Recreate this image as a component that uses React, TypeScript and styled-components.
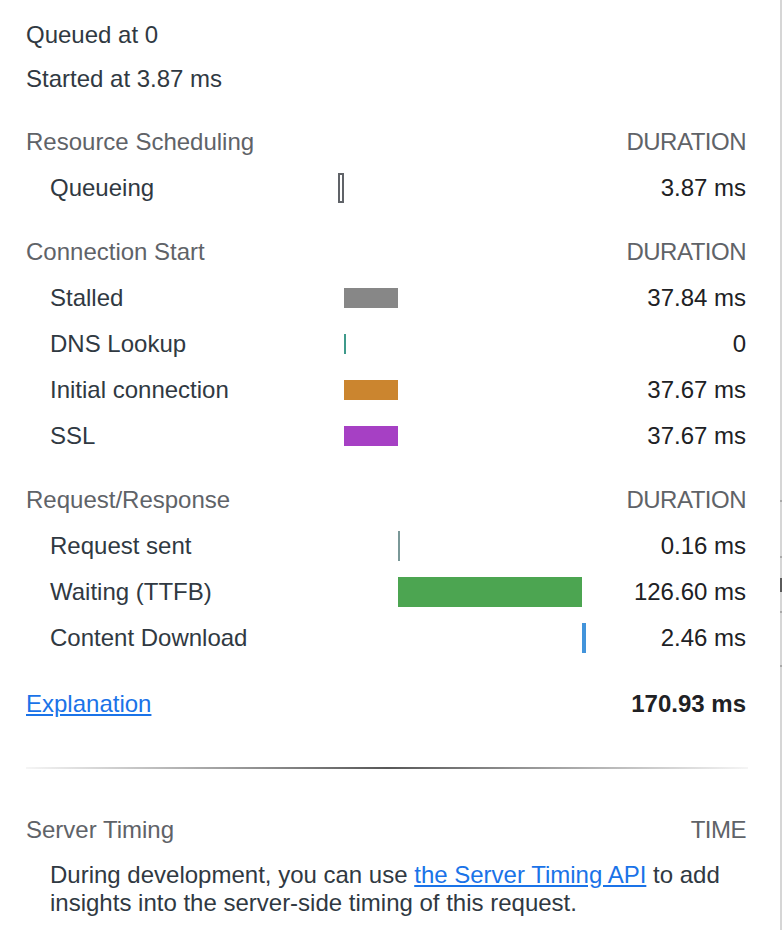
import styled, { createGlobalStyle } from "styled-components";

const GlobalStyle = createGlobalStyle`
  body {
    margin: 0;
    background: #ffffff;
    font-family: "Liberation Sans", Arial, Helvetica, sans-serif;
    font-size: 24px;
    color: #303942;
  }
`;

const TRACK_WIDTH = 248;

const Page = styled.div`
  display: flex;
  min-height: 930px;
`;

const Panel = styled.div`
  width: 780px;
  box-sizing: border-box;
  padding: 13px 34px 0 26px;
`;

const Edge = styled.div`
  width: 2px;
  background: #d6d6d6;
  position: relative;
`;

const EdgeTick = styled.div<{ $top: number; $h: number; $dark?: boolean }>`
  position: absolute;
  left: 0;
  width: 2px;
  top: ${(p) => p.$top}px;
  height: ${(p) => p.$h}px;
  background: ${(p) => (p.$dark ? "#5a5a5a" : "#a9a9a9")};
`;

const MetaLine = styled.div`
  height: 44px;
  line-height: 44px;
  color: #303942;
`;

const Section = styled.section<{ $gap?: number }>`
  margin-top: ${(p) => p.$gap ?? 18}px;
`;

const HeaderRow = styled.div`
  display: flex;
  justify-content: space-between;
  align-items: center;
  height: 46px;
  color: #5f6368;
`;

const ColumnTitle = styled.span`
  letter-spacing: -0.5px;
`;

const TimingRow = styled.div`
  display: grid;
  grid-template-columns: 312px ${TRACK_WIDTH}px 1fr;
  align-items: center;
  height: 46px;
`;

const Label = styled.div`
  padding-left: 24px;
  color: #303942;
  white-space: nowrap;
`;

const Track = styled.div`
  position: relative;
  height: 100%;
`;

const Bar = styled.div<{ $color: string; $h: number; $outline?: boolean }>`
  position: absolute;
  top: 50%;
  transform: translateY(-50%);
  height: ${(p) => p.$h}px;
  box-sizing: border-box;
  background: ${(p) => (p.$outline ? "transparent" : p.$color)};
  border: ${(p) => (p.$outline ? `2px solid ${p.$color}` : "none")};
`;

const Value = styled.div`
  text-align: right;
  color: #202124;
  white-space: nowrap;
`;

const FooterRow = styled.div`
  display: flex;
  justify-content: space-between;
  align-items: center;
  height: 46px;
  margin-top: 20px;
`;

const Link = styled.a`
  color: #1a73e8;
  text-decoration: underline;
  text-underline-offset: 2px;
  cursor: pointer;
`;

const Total = styled.div`
  font-weight: bold;
  color: #202124;
`;

const Divider = styled.div`
  margin-top: 40px;
  margin-right: -2px;
  height: 2px;
  background: linear-gradient(
    to right,
    rgba(0, 0, 0, 0.04),
    #585858 50%,
    rgba(0, 0, 0, 0.04)
  );
`;

const Note = styled.p`
  margin: 8px 0 0;
  padding-left: 24px;
  line-height: 28px;
  color: #303942;
`;

// left / width are pixel positions on the 248px timeline (170.93 ms total)
type Timing = {
  label: string;
  left: number;
  width: number;
  color: string;
  height: number;
  outline?: boolean;
  value: string;
};

type Group = { title: string; rows: Timing[] };

const groups: Group[] = [
  {
    title: "Resource Scheduling",
    rows: [
      { label: "Queueing", left: 0, width: 6, color: "#606368", height: 30, outline: true, value: "3.87 ms" },
    ],
  },
  {
    title: "Connection Start",
    rows: [
      { label: "Stalled", left: 6, width: 54, color: "#878787", height: 20, value: "37.84 ms" },
      { label: "DNS Lookup", left: 6, width: 2, color: "#3f9a8b", height: 20, value: "0" },
      { label: "Initial connection", left: 6, width: 54, color: "#cb852f", height: 20, value: "37.67 ms" },
      { label: "SSL", left: 6, width: 54, color: "#a640c4", height: 20, value: "37.67 ms" },
    ],
  },
  {
    title: "Request/Response",
    rows: [
      { label: "Request sent", left: 60, width: 2, color: "#7a9898", height: 30, value: "0.16 ms" },
      { label: "Waiting (TTFB)", left: 60, width: 184, color: "#4ca551", height: 30, value: "126.60 ms" },
      { label: "Content Download", left: 244, width: 4, color: "#4294db", height: 30, value: "2.46 ms" },
    ],
  },
];

function TimingLine({ row }: { row: Timing }) {
  return (
    <TimingRow>
      <Label>{row.label}</Label>
      <Track>
        <Bar
          $color={row.color}
          $h={row.height}
          $outline={row.outline}
          style={{ left: `${row.left}px`, width: `${row.width}px` }}
        />
      </Track>
      <Value>{row.value}</Value>
    </TimingRow>
  );
}

export default function App() {
  return (
    <>
      <GlobalStyle />
      <Page>
        <Panel>
          <MetaLine>Queued at 0</MetaLine>
          <MetaLine>Started at 3.87 ms</MetaLine>

          {groups.map((g) => (
            <Section key={g.title}>
              <HeaderRow>
                <span>{g.title}</span>
                <ColumnTitle>DURATION</ColumnTitle>
              </HeaderRow>
              {g.rows.map((r) => (
                <TimingLine key={r.label} row={r} />
              ))}
            </Section>
          ))}

          <FooterRow>
            <Link>Explanation</Link>
            <Total>170.93 ms</Total>
          </FooterRow>

          <Divider />

          <Section $gap={38}>
            <HeaderRow>
              <span>Server Timing</span>
              <ColumnTitle>TIME</ColumnTitle>
            </HeaderRow>
            <Note>
              During development, you can use <Link>the Server Timing API</Link> to add
              insights into the server-side timing of this request.
            </Note>
          </Section>
        </Panel>
        <Edge>
          <EdgeTick $top={500} $h={2} />
          <EdgeTick $top={556} $h={2} />
          <EdgeTick $top={578} $h={14} $dark />
          <EdgeTick $top={611} $h={2} />
          <EdgeTick $top={665} $h={2} />
        </Edge>
      </Page>
    </>
  );
}
